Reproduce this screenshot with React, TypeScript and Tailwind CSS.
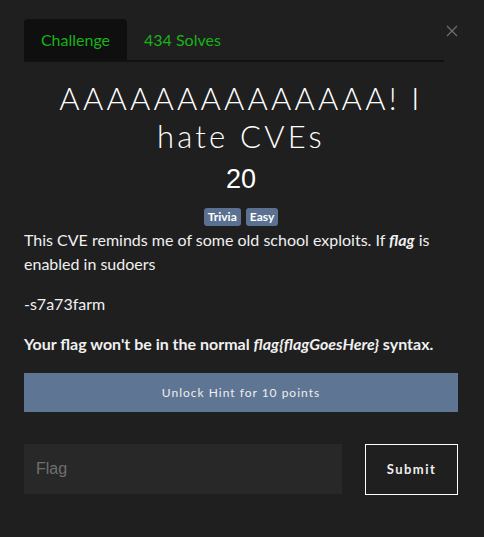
import React from "react";

export default function App() {
  return (
    <div className="w-[484px] h-[537px] bg-[#1f1f1f] text-white" style={{ fontFamily: "Lato, 'Noto Sans', sans-serif" }}>
      <div className="pl-[24px] pr-[26px] pt-[19px]">
        <div className="flex items-start">
          <div className="flex-1 flex border-b-[2px] border-[#111111] h-[43px]">
            <div className="bg-[#0f0f0f] rounded-t-[4px] w-[103px] h-[41px] flex items-center justify-center text-[#17b317] text-[16px]">
              Challenge
            </div>
            <div className="h-[41px] flex items-center pl-[17px] text-[#17b317] text-[16px]">434 Solves</div>
          </div>
          <div className="w-[14px] flex justify-end pt-[6px]">
            <svg width="12" height="12" viewBox="0 0 12 12">
              <path d="M1 1 L11 11 M11 1 L1 11" stroke="#6e6e6e" strokeWidth="1.3" />
            </svg>
          </div>
        </div>
        <div className="mt-[17px] px-[20px] text-center text-[31px] leading-[38px] font-light tracking-[3.2px]" style={{ fontFamily: "Lato, 'Noto Sans', sans-serif" }}>
          AAAAAAAAAAAAAA! I hate CVEs
        </div>
        <div className="mt-[8px] text-center text-[27px] leading-[32px]" style={{ fontFamily: "'Liberation Sans', Arial, sans-serif" }}>
          20
        </div>
        <div className="mt-[13px] flex justify-center gap-[5px]">
          <span className="bg-[#5b7191] rounded-[3px] px-[4px] h-[18px] leading-[18px] text-[12px] font-bold">Trivia</span>
          <span className="bg-[#5b7191] rounded-[3px] px-[4px] h-[18px] leading-[18px] text-[12px] font-bold">Easy</span>
        </div>
        <div className="mt-[2px] text-[16px] leading-[24px] text-[#f0f0f0]">
          <p>
            This CVE reminds me of some old school exploits. If <b><i>flag</i></b> is enabled in sudoers
          </p>
          <p className="mt-[16px]">-s7a73farm</p>
          <p className="mt-[16px] font-bold">
            Your flag won't be in the normal <i>flag{"{"}flagGoesHere{"}"}</i> syntax.
          </p>
        </div>
        <button className="mt-[17px] w-full h-[39px] bg-[#5e7593] text-[12px] tracking-[1px] text-[#eeeeee]">
          Unlock Hint for 10 points
        </button>
        <div className="mt-[32px] flex justify-between">
          <div className="w-[318px] h-[50px] bg-[#282828] flex items-center pl-[12px] text-[16px] text-[#6f6f6f]" style={{ fontFamily: "'Liberation Sans', Arial, sans-serif" }}>
            Flag
          </div>
          <button className="w-[93px] h-[51px] border border-white text-[13px] font-bold tracking-[1.5px] text-[#eeeeee]">
            Submit
          </button>
        </div>
      </div>
    </div>
  );
}
